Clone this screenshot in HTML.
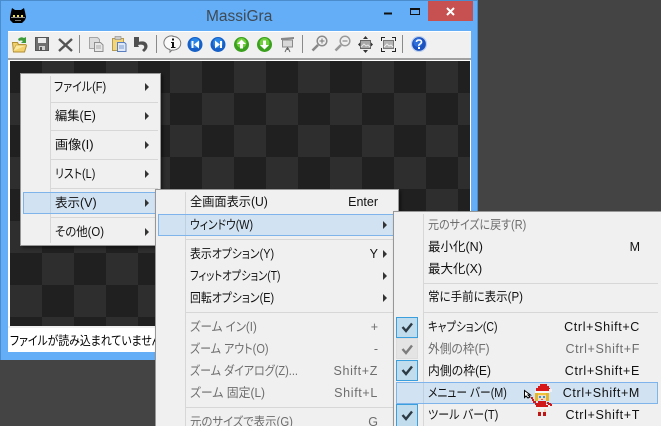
<!DOCTYPE html>
<html lang="ja"><head><meta charset="utf-8"><title>MassiGra</title>
<style>
html,body{margin:0;padding:0;width:661px;height:426px;overflow:hidden;background:#444}
#r{position:absolute;left:0;top:0;width:661px;height:426px;overflow:hidden;background:#444;font:12.5px/16px "Liberation Sans","Noto Sans CJK JP",sans-serif;font-feature-settings:"palt";color:#111}
.b{position:absolute;box-sizing:border-box}
.t{position:absolute;white-space:nowrap;height:16px;line-height:16px;transform-origin:0 50%}
.k{position:absolute;white-space:nowrap;height:16px;line-height:16px;text-align:right}
.l{letter-spacing:.65px}
.d{color:#6d6d6d}
.m{position:absolute;box-sizing:border-box;background:#f0f0f0;border:1px solid #979797;box-shadow:2px 2px 3px rgba(0,0,0,.45)}
.h{position:absolute;box-sizing:border-box;background:#d1e2f2;border:1px solid #7eb4ea}
.s{position:absolute;height:1px;background:#d7d7d7}
.g{position:absolute;width:1px;background:#d7d7d7}
.a{position:absolute;width:0;height:0;border-left:4px solid #333;border-top:4px solid transparent;border-bottom:4px solid transparent}
.c{position:absolute;box-sizing:border-box;width:22px;height:21px;background:#c1dced;border:1px solid #3a9fdc}
.c.x{background:#e4e4e4;border-color:#dcdcdc}
svg{position:absolute;left:0;top:0}
</style></head><body><div id="r">

<!-- window frame -->
<div class="b" style="left:0;top:0;width:478px;height:360px;background:#63aef7;border:1px solid #4a8ccc;border-bottom:0"></div>
<div class="b" style="left:428px;top:1px;width:45px;height:20px;background:#c75050"></div>
<div class="t" style="left:206px;top:8px;font:15.5px/17px 'Liberation Sans',sans-serif;color:#3f4a55;height:17px">MassiGra</div>

<!-- client -->
<div class="b" style="left:8px;top:31px;width:463px;height:29px;background:#f0f0f0;border-top:1px solid #fff;border-bottom:2px solid #a0a0a0"></div>
<div class="b" style="left:8px;top:60px;width:463px;height:266px;background:#fff"></div>
<div class="b" style="left:10px;top:61px;width:460px;height:265px;background-color:#202020;background-image:conic-gradient(#2e2e2e 25%,#202020 0 50%,#2e2e2e 0 75%,#202020 0);background-size:64px 64px;background-position:0 0"></div>
<div class="b" style="left:8px;top:326px;width:463px;height:26px;background:#fff;border-top:2px solid #f0f0f0"></div>
<div class="t" style="left:10px;top:333px;color:#000;transform:scaleX(.87)">ファイルが読み込まれていません</div>

<!-- frame icons + toolbar -->
<svg width="661" height="426" viewBox="0 0 661 426">
 <!-- cat -->
 <path d="M10 17l1-5 1-4 3 2h6l3-2 1 4 1 5-1 3-3 3h-9l-3-3z" fill="#000"/>
 <path d="M13 15h2v2h-2zM17 15h2v2h-2zM21 15h2v2h-2z" fill="#f2e23a"/>
 <path d="M11 17h14v1H11z" fill="#8c8c8c"/>
 <path d="M15 20h6v1h-6z" fill="#777"/>
 <!-- min/max/close -->
 <rect x="384" y="12.5" width="8" height="2" fill="#111"/>
 <path d="M410.5 8.5h9v6h-9z" fill="none" stroke="#111"/><rect x="410" y="8" width="10" height="2" fill="#111"/>
 <path d="M447 8l7 7M454 8l-7 7" stroke="#fff" stroke-width="2"/>
 <!-- separators -->
 <path d="M79.5 35v18M156.5 35v18M302.5 35v18M402.5 35v18" stroke="#8a8a8a"/>
 <!-- open folder -->
 <path d="M12.5 42.5h5l1 2h7l1 1-2 6.500h-11z" fill="#f3d26e" stroke="#b08d33" stroke-width="1"/>
 <path d="M13 51l3-6h11" fill="#fbe9a2" stroke="#c9a443" stroke-width=".8"/>
 <path d="M18 39q3-3 6-1l2-1v6h-5l2-2q-2-1-4 0z" fill="#3d9b3a"/>
 <!-- save -->
 <path d="M35.500 37.500h13v13h-13z" fill="#6f6f6f" stroke="#555"/>
 <rect x="38" y="38" width="8" height="5" fill="#ececec"/><rect x="39" y="46" width="6" height="4" fill="#d0d0d0"/><rect x="40" y="47" width="2" height="3" fill="#555"/>
 <!-- x -->
 <path d="M59 39l13 12M72 39L59 51" stroke="#555" stroke-width="2.400"/>
 <!-- copy -->
 <path d="M89.500 37.500h8l2 2v9h-10z" fill="#ddd" stroke="#a5a5a5"/>
 <path d="M94.500 42.500h6l2.500 2.500v6.500h-8.500z" fill="#e8e8e8" stroke="#8f8f8f"/>
 <path d="M96 46h5M96 48h5" stroke="#aaa"/>
 <!-- paste -->
 <path d="M112.500 38.500h11v12h-11z" fill="#f3d67c" stroke="#b59b52"/>
 <rect x="115" y="36.500" width="6" height="3" fill="#ccc" stroke="#888" stroke-width=".6"/>
 <path d="M117.500 42.500h7l1.500 1.500v7.500h-8.500z" fill="#dfe8f8" stroke="#5a7fc0"/>
 <path d="M119 46h5M119 48h5" stroke="#7d9bd0"/>
 <!-- undo -->
 <path d="M134 37h5v5h-1q7-2 9 2t-3 8l-2-2q3-2 2-4t-6-1l1 2h-5z" fill="#505050"/>
 <!-- info -->
 <path d="M173 36.500a7.500 6.800 0 1 1-1 13.500l-2 2v-2.500a7.500 6.800 0 0 1 3-13.500z" fill="#fafafa" stroke="#777"/>
 <path d="M172 38.500h2v2h-2zM171 42h3v5h1.500v1h-4.500v-1h1v-4h-1z" fill="#111"/>
 <!-- prev/next -->
 <circle cx="195" cy="44.500" r="7.500" fill="#1660c8"/><circle cx="195" cy="43" r="5" fill="#2a86e6"/>
 <path d="M191.500 41h2v7h-2zM199 40.500v8l-5-4z" fill="#fff"/>
 <circle cx="218" cy="44.500" r="7.500" fill="#1660c8"/><circle cx="218" cy="43" r="5" fill="#2a86e6"/>
 <path d="M220 41h2v7h-2zM215 40.500v8l5-4z" fill="#fff"/>
 <!-- up/down -->
 <circle cx="241.500" cy="44.500" r="7.500" fill="#3aa01e"/><circle cx="241.500" cy="43" r="5" fill="#72cf3d"/>
 <path d="M241.500 39.500l4.500 4.500h-3v4.500h-3v-4.500h-3z" fill="#fff"/>
 <circle cx="264.500" cy="44.500" r="7.500" fill="#3aa01e"/><circle cx="264.500" cy="43" r="5" fill="#72cf3d"/>
 <path d="M264.500 49.500l-4.500-4.500h3v-4.500h3v4.500h3z" fill="#fff"/>
 <!-- projector -->
 <path d="M281 38l13-1v2l-13 1z" fill="#888"/><path d="M282.500 40h10v7h-10z" fill="#d8d8d8" stroke="#8a8a8a"/>
 <path d="M287.500 47v3M285 52l2-4M290 52l-2-4" stroke="#666"/>
 <!-- zoom in/out -->
 <g fill="none"><circle cx="322" cy="41" r="4.800" fill="#f0f0f0" stroke="#8a8a8a" stroke-width="1.500"/><path d="M318 45l-5.500 5.500" stroke="#888" stroke-width="2.600"/><path d="M319.500 41h5M322 38.500v5" stroke="#777"/>
 <circle cx="345" cy="41" r="4.800" fill="#f0f0f0" stroke="#9a9a9a" stroke-width="1.500"/><path d="M341 45l-5.500 5.500" stroke="#999" stroke-width="2.600"/><path d="M342.500 41h5" stroke="#777"/></g>
 <!-- fit -->
 <rect x="360.500" y="40.500" width="10" height="8" fill="#a8a8a8" stroke="#666"/>
 <path d="M361 47l3-3 2 2 2-1 2 2" stroke="#e5e5e5" fill="none"/>
 <path d="M365.500 36l-2.500 3h5zM365.500 53l-2.500-3h5zM358 44.500l2-2v4zM373 44.500l-2-2v4z" fill="#333"/>
 <!-- full -->
 <rect x="383.500" y="40.500" width="10" height="8" fill="#b4b4b4" stroke="#777"/>
 <path d="M384 47l3-3 2 2 2-1 2 2" stroke="#eee" fill="none"/>
 <path d="M381.500 41v-3.500h3.500M392 37.500h3.500v3.500M395.500 48v3.500H392M385 51.500h-3.500V48" fill="none" stroke="#222"/>
 <!-- help -->
 <circle cx="419" cy="44" r="7.500" fill="#1c52c0" stroke="#bfd0ee" stroke-width="1.200"/><circle cx="418" cy="42.500" r="4.500" fill="#2f6fdc"/>
 <path d="M416.500 42q0-2 2.500-2t2.500 2q0 1-1.500 2t-1 2" fill="none" stroke="#fff" stroke-width="1.600"/><rect x="418" y="47" width="2" height="2" fill="#fff"/>
</svg>

<!-- menu 1 -->
<div class="m" style="left:20px;top:73px;width:141px;height:173px"></div>
<div class="g" style="left:50px;top:76px;height:167px"></div>
<div class="s" style="left:51px;top:102px;width:107px"></div>
<div class="s" style="left:51px;top:130px;width:107px"></div>
<div class="s" style="left:51px;top:159px;width:107px"></div>
<div class="s" style="left:51px;top:188px;width:107px"></div>
<div class="s" style="left:51px;top:217px;width:107px"></div>
<div class="h" style="left:23px;top:192px;width:136px;height:22px"></div>
<div class="g" style="left:50px;top:193px;height:20px;background:#bfd0e0"></div>
<div class="t" style="left:54px;top:79px;transform:scaleX(.88)">ファイル(F)</div>
<div class="t" style="left:55px;top:108px;transform:scaleX(.98)">編集(E)</div>
<div class="t" style="left:55px;top:137px;transform:scaleX(1.05)">画像(I)</div>
<div class="t" style="left:55px;top:166px;transform:scaleX(.87)">リスト(L)</div>
<div class="t" style="left:55px;top:195px">表示(V)</div>
<div class="t" style="left:55px;top:224px;transform:scaleX(.91)">その他(O)</div>
<div class="a" style="left:145px;top:83px"></div>
<div class="a" style="left:145px;top:112px"></div>
<div class="a" style="left:145px;top:141px"></div>
<div class="a" style="left:145px;top:170px"></div>
<div class="a" style="left:145px;top:199px"></div>
<div class="a" style="left:145px;top:228px"></div>

<!-- menu 2 -->
<div class="m" style="left:155px;top:189px;width:244px;height:237px;border-bottom:0"></div>
<div class="g" style="left:185px;top:192px;height:234px"></div>
<div class="h" style="left:158px;top:214px;width:240px;height:22px"></div>
<div class="g" style="left:185px;top:215px;height:20px;background:#bfd0e0"></div>
<div class="s" style="left:186px;top:239px;width:210px"></div>
<div class="s" style="left:186px;top:312px;width:210px"></div>
<div class="s" style="left:186px;top:407px;width:210px"></div>
<div class="t" style="left:190px;top:194px;transform:scaleX(.975)">全画面表示(U)</div>
<div class="k" style="left:300px;width:78px;top:194px">Enter</div>
<div class="t" style="left:190px;top:217px;transform:scaleX(.86)">ウィンドウ(W)</div>
<div class="t" style="left:190px;top:246px;transform:scaleX(.87)">表示オプション(Y)</div>
<div class="k" style="left:300px;width:78px;top:246px">Y</div>
<div class="t" style="left:190px;top:268px;transform:scaleX(.82)">フィットオプション(T)</div>
<div class="t" style="left:190px;top:290px;transform:scaleX(.87)">回転オプション(E)</div>
<div class="a" style="left:383px;top:221px"></div>
<div class="a" style="left:383px;top:250px"></div>
<div class="a" style="left:383px;top:272px"></div>
<div class="a" style="left:383px;top:294px"></div>
<div class="t d" style="left:190px;top:319px;transform:scaleX(.92)">ズーム イン(I)</div>
<div class="k d" style="left:300px;width:78px;top:319px">+</div>
<div class="t d" style="left:190px;top:341px;transform:scaleX(.88)">ズーム アウト(O)</div>
<div class="k d" style="left:300px;width:78px;top:341px">-</div>
<div class="t d" style="left:190px;top:363px;transform:scaleX(.88)">ズーム ダイアログ(Z)...</div>
<div class="k d l" style="left:300px;width:78px;top:363px">Shift+Z</div>
<div class="t d" style="left:190px;top:385px;transform:scaleX(.95)">ズーム 固定(L)</div>
<div class="k d l" style="left:300px;width:78px;top:385px">Shift+L</div>
<div style="position:absolute;left:186px;top:413px;width:207px;height:13px;overflow:hidden">
 <div class="t d" style="left:4px;top:1px;transform:scaleX(.91)">元のサイズで表示(G)</div>
 <div class="k d" style="left:114px;width:78px;top:1px">G</div>
</div>

<!-- menu 3 -->
<div class="m" style="left:393px;top:211px;width:268px;height:215px;border-right:0;border-bottom:0"></div>
<div class="g" style="left:423px;top:214px;height:212px"></div>
<div class="s" style="left:424px;top:283px;width:234px"></div>
<div class="s" style="left:424px;top:312px;width:234px"></div>
<div class="c" style="left:396px;top:317px"></div>
<div class="c x" style="left:396px;top:338px"></div>
<div class="c" style="left:396px;top:360px"></div>
<div class="c" style="left:396px;top:404px;height:22px;border-bottom:0"></div>
<div class="h" style="left:396px;top:382px;width:262px;height:22px"></div>
<div class="g" style="left:423px;top:383px;height:20px;background:#bfd0e0"></div>
<div class="t d" style="left:428px;top:217px;transform:scaleX(.88)">元のサイズに戻す(R)</div>
<div class="t" style="left:428px;top:239px">最小化(N)</div>
<div class="k" style="left:600px;width:40px;top:239px">M</div>
<div class="t" style="left:428px;top:261px">最大化(X)</div>
<div class="t" style="left:428px;top:289px;transform:scaleX(.92)">常に手前に表示(P)</div>
<div class="t" style="left:428px;top:319px;transform:scaleX(.84)">キャプション(C)</div>
<div class="k l" style="left:520px;width:120px;top:319px">Ctrl+Shift+C</div>
<div class="t d" style="left:428px;top:341px;transform:scaleX(.94)">外側の枠(F)</div>
<div class="k d l" style="left:520px;width:120px;top:341px">Ctrl+Shift+F</div>
<div class="t" style="left:428px;top:363px;transform:scaleX(.95)">内側の枠(E)</div>
<div class="k l" style="left:520px;width:120px;top:363px">Ctrl+Shift+E</div>
<div class="t" style="left:428px;top:385px;transform:scaleX(.86)">メニュー バー(M)</div>
<div class="k l" style="left:520px;width:120px;top:385px">Ctrl+Shift+M</div>
<div class="t" style="left:428px;top:407px;transform:scaleX(.89)">ツール バー(T)</div>
<div class="k l" style="left:520px;width:120px;top:407px">Ctrl+Shift+T</div>

<svg width="661" height="426" viewBox="0 0 661 426">
 <g fill="none" stroke-width="2.400">
  <path d="M402.500 327l3.500 4 6-7.500" stroke="#2c3a44"/>
  <path d="M402.500 349l3.500 4 6-7.500" stroke="#7d7d7d"/>
  <path d="M402.500 370l3.500 4 6-7.500" stroke="#2c3a44"/>
  <path d="M402.500 415l3.500 4 6-7.500" stroke="#2c3a44"/>
 </g>
 <!-- cursor -->
 <path d="M524.500 390.500v7l1.500-1.500 2 2 2-1-2-2h2.500z" fill="#fff" stroke="#000"/>
 <!-- santa sprite -->
 <g shape-rendering="crispEdges">
  <path d="M536 388h2v-2h2v-2h7v2h2v2h1v4h-14z" fill="#d81818"/>
  <rect x="535" y="391" width="15" height="2" fill="#f6f6f6"/>
  <rect x="549" y="389" width="3" height="3" fill="#f2f2f2"/>
  <rect x="535" y="393" width="3" height="8" fill="#e4b62c"/>
  <rect x="546" y="393" width="3" height="8" fill="#e4b62c"/>
  <rect x="538" y="393" width="8" height="7" fill="#fbd9b4"/>
  <rect x="538" y="393" width="8" height="2" fill="#eec23a"/>
  <rect x="539" y="396" width="2" height="2" fill="#2a9ad8"/>
  <rect x="543" y="396" width="2" height="2" fill="#2a9ad8"/>
  <rect x="541" y="399" width="2" height="1" fill="#d0605a"/>
  <path d="M538 401h8v4h2v3h-12v-3h2z" fill="#d01818"/>
  <rect x="536" y="407" width="12" height="2" fill="#f4f4f4"/>
  <path d="M531 397h2v2h1v2h2v2h2v2h-3v-2h-2v-2h-1v-2h-1z" fill="#d01818"/>
  <path d="M547 402h2v1h2v1h1v2h-2v-1h-2v-1h-1z" fill="#d01818"/>
  <rect x="538" y="409" width="2" height="3" fill="#fbd9b4"/>
  <rect x="544" y="409" width="2" height="3" fill="#fbd9b4"/>
  <rect x="538" y="412" width="3" height="4" fill="#c01515"/>
  <rect x="543" y="412" width="3" height="4" fill="#c01515"/>
 </g>
</svg>
</div></body></html>
